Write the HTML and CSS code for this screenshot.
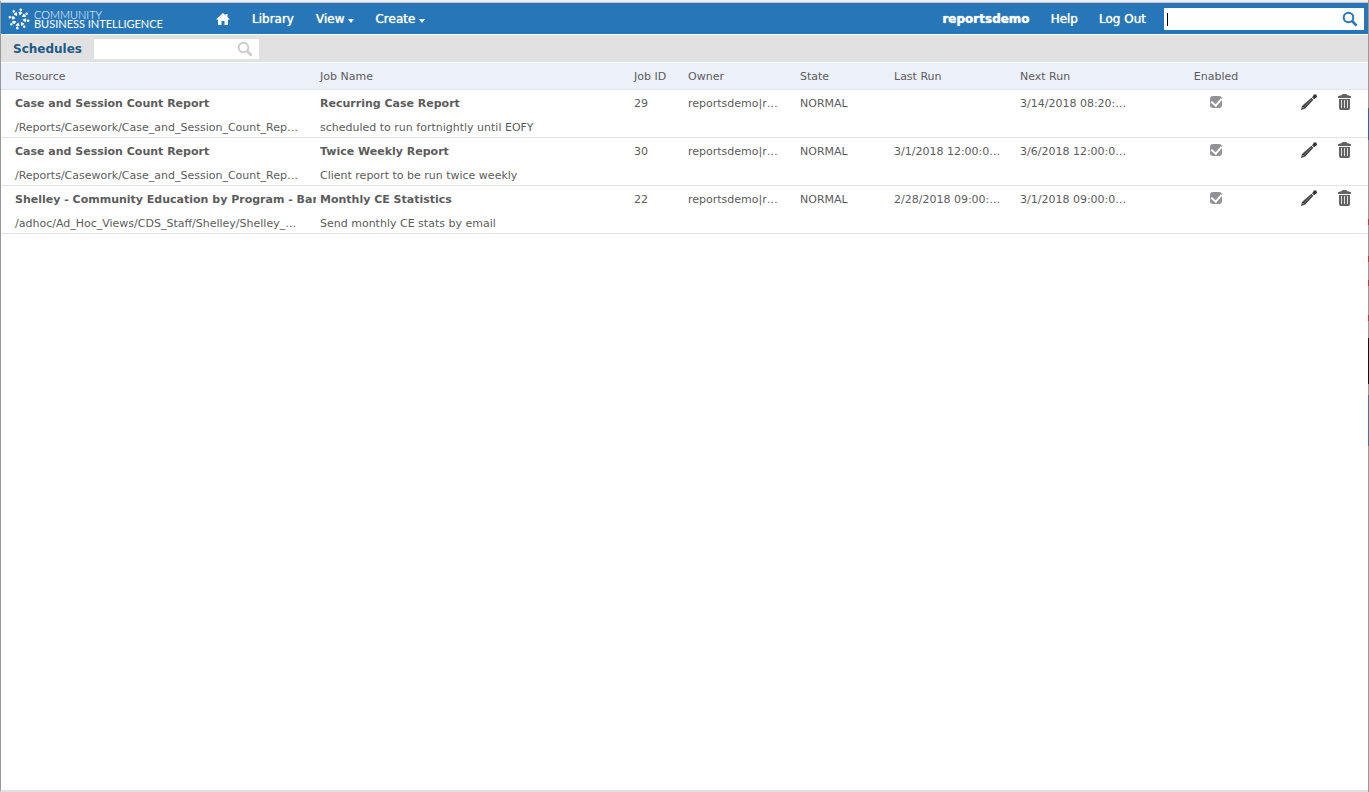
FILE: index.html
```html
<!DOCTYPE html>
<html lang="en">
<head>
<meta charset="utf-8">
<title>Schedules</title>
<link rel="stylesheet" href="styles.css">
</head>
<body>
<svg class="defs" aria-hidden="true">
  <symbol id="search" viewBox="0 0 16 16"><circle cx="6.500" cy="6.500" r="4.800" fill="none" stroke="currentColor" stroke-width="2"/><path d="M10 10l4.600 4.600" stroke="currentColor" stroke-width="2.600"/></symbol>
  <symbol id="pencil" viewBox="0 0 16 16"><path d="M0 16l1-4L10.400 3.800l2 2L4 14.800z" fill="#444"/><path d="M11 3.200l1.400-1.200 2 2-1.200 1.300z" fill="#333"/><circle cx="14" cy="2.200" r="1.900" fill="#333"/><path d="M3.600 12l6.800-6.200" stroke="#777" stroke-width="1"/><path d="M1.500 13l1.500 1.500" stroke="#aaa" stroke-width="1"/></symbol>
  <symbol id="trash" viewBox="0 0 13 16"><path d="M0 2h1q2-1 3-1 0-1 1-1h3q1 0 1 1 1 0 3 1h1v2H0zM1 5h11v9q0 2-2 2H3q-2 0-2-2z" fill="#636363"/><path d="M3.500 6v8M6.500 6v8M9.500 6v8" stroke="#ddd" stroke-width="1"/></symbol>
</svg>
<div class="window">
  <header class="banner">
    <a class="logo" href="#" aria-label="Community Business Intelligence">
      <svg class="mark" viewBox="0 0 22 22"><g fill="#fff" transform="rotate(12 11 11)"><g id="ray"><path d="M11 7.500L9 4.600 11 3.400l2 .8z"/><circle cx="10.800" cy="1.700" r="1.300"/></g><use href="#ray" transform="rotate(45 11 11)"/><use href="#ray" transform="rotate(90 11 11)"/><use href="#ray" transform="rotate(135 11 11)"/><use href="#ray" transform="rotate(180 11 11)"/><use href="#ray" transform="rotate(225 11 11)"/><use href="#ray" transform="rotate(270 11 11)"/><use href="#ray" transform="rotate(315 11 11)"/></g></svg>
      <span class="wordmark"><span class="light">COMMUNITY</span><span>BUSINESS INTELLIGENCE</span></span>
    </a>
    <nav class="menu">
      <a href="#" aria-label="Home"><svg class="home" viewBox="0 0 14 12"><path d="M7 0L0 6.500h2V12h3.500V8h3v4H12V6.500h2L11.500 4V1h-2v1.300z" fill="#fff"/></svg></a>
      <a href="#">Library</a>
      <a href="#">View<i class="caret"></i></a>
      <a href="#">Create<i class="caret"></i></a>
    </nav>
    <nav class="account">
      <b>reportsdemo</b>
      <a href="#">Help</a>
      <a href="#">Log Out</a>
    </nav>
    <form class="search main-search"><input type="text" aria-label="Search"><button type="button" aria-label="Search"><svg viewBox="0 0 16 16"><use href="#search"/></svg></button></form>
  </header>
  <div class="toolbar">
    <h1>Schedules</h1>
    <form class="search"><input type="text" aria-label="Search schedules"><button type="button" aria-label="Search schedules"><svg viewBox="0 0 16 16"><use href="#search"/></svg></button></form>
  </div>
  <main>
    <table class="jobs">
      <colgroup><col class="c-resource"><col class="c-name"><col class="c-id"><col class="c-owner"><col class="c-state"><col class="c-last"><col class="c-next"><col class="c-enabled"><col class="c-actions"></colgroup>
      <thead><tr><th>Resource</th><th>Job Name</th><th>Job ID</th><th>Owner</th><th>State</th><th>Last Run</th><th>Next Run</th><th class="center">Enabled</th><th></th></tr></thead>
      <tbody>
        <tr><td><b>Case and Session Count Report</b><p>/Reports/Casework/Case_and_Session_Count_Rep…</p></td><td><b>Recurring Case Report</b><p>scheduled to run fortnightly until EOFY</p></td><td>29</td><td>reportsdemo|r…</td><td>NORMAL</td><td></td><td>3/14/2018 08:20:…</td><td class="center"><input type="checkbox" aria-label="Enabled" checked></td><td><div class="actions"><button aria-label="Edit"><svg class="pencil" viewBox="0 0 16 16"><use href="#pencil"/></svg></button><button aria-label="Delete"><svg class="trash" viewBox="0 0 13 16"><use href="#trash"/></svg></button></div></td></tr>
        <tr><td><b>Case and Session Count Report</b><p>/Reports/Casework/Case_and_Session_Count_Rep…</p></td><td><b>Twice Weekly Report</b><p>Client report to be run twice weekly</p></td><td>30</td><td>reportsdemo|r…</td><td>NORMAL</td><td>3/1/2018 12:00:0…</td><td>3/6/2018 12:00:0…</td><td class="center"><input type="checkbox" aria-label="Enabled" checked></td><td><div class="actions"><button aria-label="Edit"><svg class="pencil" viewBox="0 0 16 16"><use href="#pencil"/></svg></button><button aria-label="Delete"><svg class="trash" viewBox="0 0 13 16"><use href="#trash"/></svg></button></div></td></tr>
        <tr><td><b>Shelley - Community Education by Program - Bar</b><p>/adhoc/Ad_Hoc_Views/CDS_Staff/Shelley/Shelley_…</p></td><td><b>Monthly CE Statistics</b><p>Send monthly CE stats by email</p></td><td>22</td><td>reportsdemo|r…</td><td>NORMAL</td><td>2/28/2018 09:00:…</td><td>3/1/2018 09:00:0…</td><td class="center"><input type="checkbox" aria-label="Enabled" checked></td><td><div class="actions"><button aria-label="Edit"><svg class="pencil" viewBox="0 0 16 16"><use href="#pencil"/></svg></button><button aria-label="Delete"><svg class="trash" viewBox="0 0 13 16"><use href="#trash"/></svg></button></div></td></tr>
      </tbody>
    </table>
  </main>
</div>
<div class="edge"></div>
</body>
</html>
```
FILE: styles.css
```css
* { box-sizing: border-box; }
body { display: flex; margin: 0; font: 11px/18px "DejaVu Sans", Verdana, sans-serif; color: #5c5c5c; }
.defs { position: absolute; width: 0; height: 0; }
.window { flex: 1; min-width: 0; display: flex; flex-direction: column; min-height: 100vh; background: #fff; border-left: 1px solid #999; border-top: 2px solid #efefef; border-bottom: 2px solid #e1e1e1; }
/* desktop showing past the window's right side */
.edge { width: 1px; background: linear-gradient(#999 108px, #1f6aa5 108px 140px, #999 140px 219px, #b04040 219px 225px, #999 225px 256px, #b04040 256px 262px, #999 262px 280px, #b04040 280px 286px, #999 286px 315px, #b04040 315px 321px, #999 321px 338px, #111 338px 384px, #999 384px 395px, #3a75a5 395px 446px, #999 446px); }
.banner { display: flex; align-items: center; height: 32px; padding: 0 4px 0 7px; background: #2777b8; border-top: 1px solid #c4c8cc; font-size: 12px; color: #fff; }
a { color: inherit; text-decoration: none; }
button { display: flex; padding: 0; border: 0; background: none; color: inherit; }
svg { display: block; }
.logo { display: flex; align-items: center; gap: 4px; width: 208px; }
.mark { width: 22px; height: 22px; }
.wordmark { display: flex; flex-direction: column; font: 11px/9px Lato, sans-serif; white-space: nowrap; }
.light { font-weight: 300; }
.menu, .account { display: flex; align-items: center; }
.menu { gap: 22px; text-shadow: 0 0 1px #fff; }
.menu a { display: flex; align-items: center; }
.home { width: 14px; height: 12px; }
.caret { margin: 4px -1px 0 4px; border: solid transparent; border-width: 4px 3px 0; border-top-color: #fff; }
.account { gap: 21px; margin-left: auto; margin-right: 18px; text-shadow: 0 0 1px #fff; }
.search { display: flex; align-items: center; width: 165px; height: 20px; padding-right: 6px; background: #fff; color: #ccc; }
.search input { flex: 1; min-width: 0; height: 100%; padding: 0 3px; border: 0; outline: 0; background: none; font: inherit; color: #000; }
.search svg { width: 16px; height: 16px; }
.main-search { width: 200px; height: 22px; color: #2777b8; }
.main-search input { background: linear-gradient(#000, #000) 3px 5px / 1px 13px no-repeat; }
.toolbar { display: flex; align-items: center; gap: 12px; height: 29px; padding-left: 12px; background: #e1e1e1; border: solid #fff; border-width: 1px 0; }
h1 { margin: 0; font-size: 12px; line-height: 18px; color: #205a86; }
main { flex: 1; }
.jobs { width: 100%; table-layout: fixed; border-collapse: separate; border-spacing: 0; }
.c-resource { width: 315px; }
.c-name { width: 314px; }
.c-id { width: 54px; }
.c-owner { width: 112px; }
.c-state { width: 94px; }
.c-last { width: 126px; }
.c-next { width: 156px; }
.c-enabled { width: 88px; }
th, td { padding: 4px 0 0 4px; text-align: left; vertical-align: top; font-weight: normal; white-space: nowrap; overflow: hidden; border-bottom: 1px solid #e3e3e3; }
th:first-child, td:first-child { padding-left: 14px; }
th { height: 27px; padding-top: 5px; background: #ecf0f8; border-color: #e1e4ea; }
td { height: 48px; line-height: 20px; }
.jobs b { display: block; overflow: hidden; margin-bottom: 5px; }
.jobs p { margin: 0; line-height: 18px; }
.jobs .center { text-align: center; padding-left: 0; }
.jobs input { appearance: none; display: grid; place-items: center; width: 12px; height: 12px; margin: 2px auto 0; border-radius: 3px; background: #929296; }
.jobs input::after { content: ""; width: 5px; height: 8px; margin-bottom: 2px; border: solid #fff; border-width: 0 2px 2px 0; transform: rotate(40deg); }
.actions { display: flex; justify-content: flex-end; gap: 21px; padding-right: 17px; }
.pencil { width: 16px; height: 16px; }
.trash { width: 13px; height: 16px; }
```
